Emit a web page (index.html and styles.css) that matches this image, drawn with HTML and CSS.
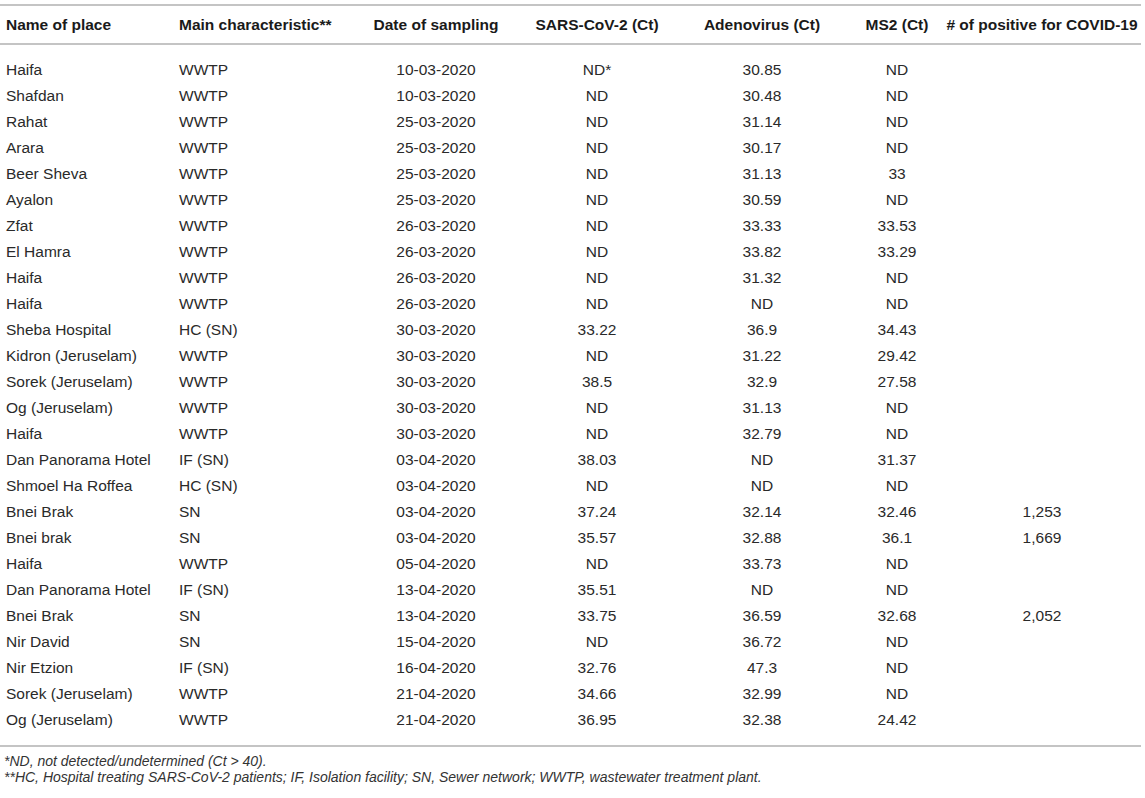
FILE: index.html
```html
<!DOCTYPE html>
<html lang="en">
<head>
<meta charset="utf-8">
<title>Table</title>
<link rel="stylesheet" href="styles.css">
</head>
<body>
<div class="wrap">
<table class="data">
<colgroup>
<col class="c1"><col class="c2"><col class="c3"><col class="c4"><col class="c5"><col class="c6"><col class="c7">
</colgroup>
<thead>
<tr><th class="l">Name of place</th><th class="l">Main characteristic**</th><th>Date of sampling</th><th>SARS-CoV-2 (Ct)</th><th>Adenovirus (Ct)</th><th>MS2 (Ct)</th><th># of positive for COVID-19</th></tr>
</thead>
<tbody>
<tr><td class="l">Haifa</td><td class="l">WWTP</td><td>10-03-2020</td><td>ND*</td><td>30.85</td><td>ND</td><td></td></tr>
<tr><td class="l">Shafdan</td><td class="l">WWTP</td><td>10-03-2020</td><td>ND</td><td>30.48</td><td>ND</td><td></td></tr>
<tr><td class="l">Rahat</td><td class="l">WWTP</td><td>25-03-2020</td><td>ND</td><td>31.14</td><td>ND</td><td></td></tr>
<tr><td class="l">Arara</td><td class="l">WWTP</td><td>25-03-2020</td><td>ND</td><td>30.17</td><td>ND</td><td></td></tr>
<tr><td class="l">Beer Sheva</td><td class="l">WWTP</td><td>25-03-2020</td><td>ND</td><td>31.13</td><td>33</td><td></td></tr>
<tr><td class="l">Ayalon</td><td class="l">WWTP</td><td>25-03-2020</td><td>ND</td><td>30.59</td><td>ND</td><td></td></tr>
<tr><td class="l">Zfat</td><td class="l">WWTP</td><td>26-03-2020</td><td>ND</td><td>33.33</td><td>33.53</td><td></td></tr>
<tr><td class="l">El Hamra</td><td class="l">WWTP</td><td>26-03-2020</td><td>ND</td><td>33.82</td><td>33.29</td><td></td></tr>
<tr><td class="l">Haifa</td><td class="l">WWTP</td><td>26-03-2020</td><td>ND</td><td>31.32</td><td>ND</td><td></td></tr>
<tr><td class="l">Haifa</td><td class="l">WWTP</td><td>26-03-2020</td><td>ND</td><td>ND</td><td>ND</td><td></td></tr>
<tr><td class="l">Sheba Hospital</td><td class="l">HC (SN)</td><td>30-03-2020</td><td>33.22</td><td>36.9</td><td>34.43</td><td></td></tr>
<tr><td class="l">Kidron (Jeruselam)</td><td class="l">WWTP</td><td>30-03-2020</td><td>ND</td><td>31.22</td><td>29.42</td><td></td></tr>
<tr><td class="l">Sorek (Jeruselam)</td><td class="l">WWTP</td><td>30-03-2020</td><td>38.5</td><td>32.9</td><td>27.58</td><td></td></tr>
<tr><td class="l">Og (Jeruselam)</td><td class="l">WWTP</td><td>30-03-2020</td><td>ND</td><td>31.13</td><td>ND</td><td></td></tr>
<tr><td class="l">Haifa</td><td class="l">WWTP</td><td>30-03-2020</td><td>ND</td><td>32.79</td><td>ND</td><td></td></tr>
<tr><td class="l">Dan Panorama Hotel</td><td class="l">IF (SN)</td><td>03-04-2020</td><td>38.03</td><td>ND</td><td>31.37</td><td></td></tr>
<tr><td class="l">Shmoel Ha Roffea</td><td class="l">HC (SN)</td><td>03-04-2020</td><td>ND</td><td>ND</td><td>ND</td><td></td></tr>
<tr><td class="l">Bnei Brak</td><td class="l">SN</td><td>03-04-2020</td><td>37.24</td><td>32.14</td><td>32.46</td><td>1,253</td></tr>
<tr><td class="l">Bnei brak</td><td class="l">SN</td><td>03-04-2020</td><td>35.57</td><td>32.88</td><td>36.1</td><td>1,669</td></tr>
<tr><td class="l">Haifa</td><td class="l">WWTP</td><td>05-04-2020</td><td>ND</td><td>33.73</td><td>ND</td><td></td></tr>
<tr><td class="l">Dan Panorama Hotel</td><td class="l">IF (SN)</td><td>13-04-2020</td><td>35.51</td><td>ND</td><td>ND</td><td></td></tr>
<tr><td class="l">Bnei Brak</td><td class="l">SN</td><td>13-04-2020</td><td>33.75</td><td>36.59</td><td>32.68</td><td>2,052</td></tr>
<tr><td class="l">Nir David</td><td class="l">SN</td><td>15-04-2020</td><td>ND</td><td>36.72</td><td>ND</td><td></td></tr>
<tr><td class="l">Nir Etzion</td><td class="l">IF (SN)</td><td>16-04-2020</td><td>32.76</td><td>47.3</td><td>ND</td><td></td></tr>
<tr><td class="l">Sorek (Jeruselam)</td><td class="l">WWTP</td><td>21-04-2020</td><td>34.66</td><td>32.99</td><td>ND</td><td></td></tr>
<tr><td class="l">Og (Jeruselam)</td><td class="l">WWTP</td><td>21-04-2020</td><td>36.95</td><td>32.38</td><td>24.42</td><td></td></tr>
</tbody>
</table>
<div class="notes">
<p>*ND, not detected/undetermined (Ct &gt; 40).</p>
<p>**HC, Hospital treating SARS-CoV-2 patients; IF, Isolation facility; SN, Sewer network; WWTP, wastewater treatment plant.</p>
</div>
</div>
</body>
</html>
```

FILE: styles.css
```css
html, body {
  margin: 0;
  padding: 0;
  background: #ffffff;
}
body {
  font-family: "Liberation Sans", Arial, Helvetica, sans-serif;
  color: #222;
}
.wrap {
  width: 1141px;
  padding-top: 4px;
}
.data {
  width: 1141px;
  table-layout: fixed;
  border-collapse: collapse;
  font-size: 15.5px;
  border-top: 2px solid #c4c4c4;
  border-bottom: 2px solid #c4c4c4;
}
.c1 { width: 173px; }
.c2 { width: 178px; }
.c3 { width: 170px; }
.c4 { width: 152px; }
.c5 { width: 178px; }
.c6 { width: 92px; }
.c7 { width: 198px; }
.data th {
  font-weight: bold;
  color: #1a1a1a;
  text-align: center;
  height: 37px;
  padding: 0;
  white-space: nowrap;
  border-bottom: 2px solid #c4c4c4;
}
.data td {
  text-align: center;
  height: 26px;
  padding: 0;
  white-space: nowrap;
  color: #2a2a2a;
}
.data .l {
  text-align: left;
  padding-left: 6px;
}
.data tbody tr:first-child td {
  padding-top: 12px;
}
.data tbody tr:last-child td {
  padding-bottom: 12px;
}
.notes {
  padding: 6px 0 0 4px;
  font-size: 14px;
  font-style: italic;
  color: #333;
}
.notes p {
  margin: 0;
  line-height: 16px;
}
```
